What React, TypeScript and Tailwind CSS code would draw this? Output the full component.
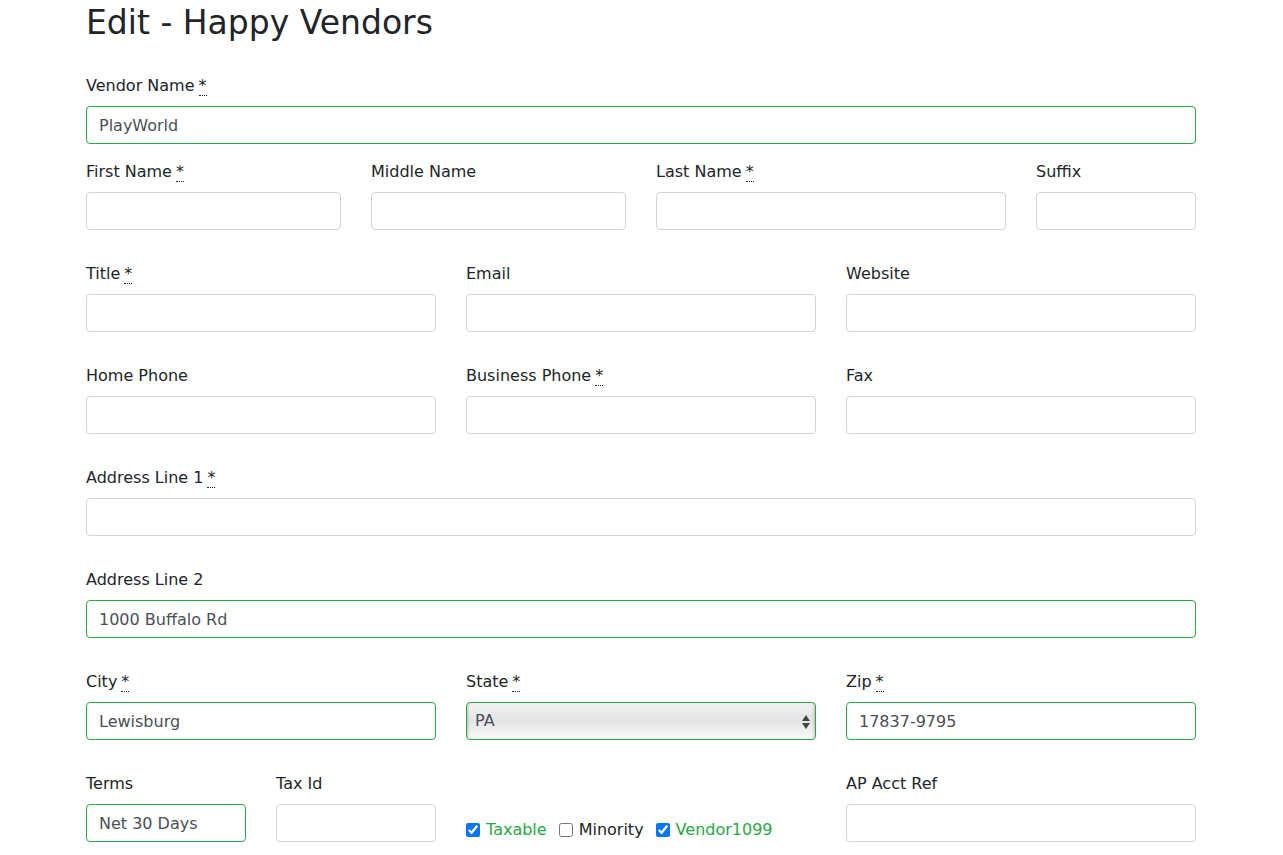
import { ReactNode } from "react";

const Req = () => (
  <abbr
    title="required"
    className="ml-1 no-underline border-b border-dotted border-[#212529] cursor-help"
  >
    *
  </abbr>
);

const Field = ({
  label,
  required,
  value,
  valid,
  className,
}: {
  label: string;
  required?: boolean;
  value?: string;
  valid?: boolean;
  className?: string;
}) => (
  <div className={className}>
    <label className="block mb-2 leading-6">
      {label}
      {required && <Req />}
    </label>
    <input
      type="text"
      defaultValue={value}
      className={
        "block w-full h-[38px] px-3 rounded border bg-white text-[#495057] outline-none " +
        (valid ? "border-[#28a745]" : "border-[#ced4da]")
      }
    />
  </div>
);

const Row = ({ children, className }: { children: ReactNode; className?: string }) => (
  <div className={"grid grid-cols-12 gap-x-[30px] " + (className ?? "")}>{children}</div>
);

const Check = ({ label, checked }: { label: string; checked?: boolean }) => (
  <label className={"flex items-center " + (checked ? "text-[#28a745]" : "text-[#212529]")}>
    <input type="checkbox" defaultChecked={checked} className="w-[14px] h-[14px] mr-[6px] accent-[#0a75ef]" />
    {label}
  </label>
);

export default function App() {
  return (
    <div
      className="min-h-screen bg-white text-[#212529] text-base"
      style={{ fontFamily: '"DejaVu Sans", sans-serif' }}
    >
      <div className="w-[1110px] ml-[86px]">
        <h1 className="text-[33px] leading-[46px] font-normal mb-[28px]">Edit - Happy Vendors</h1>

        <Field label="Vendor Name" required value="PlayWorld" valid className="mb-4" />

        <Row className="mb-8">
          <Field label="First Name" required className="col-span-3" />
          <Field label="Middle Name" className="col-span-3" />
          <Field label="Last Name" required className="col-span-4" />
          <Field label="Suffix" className="col-span-2" />
        </Row>

        <Row className="mb-8">
          <Field label="Title" required className="col-span-4" />
          <Field label="Email" className="col-span-4" />
          <Field label="Website" className="col-span-4" />
        </Row>

        <Row className="mb-8">
          <Field label="Home Phone" className="col-span-4" />
          <Field label="Business Phone" required className="col-span-4" />
          <Field label="Fax" className="col-span-4" />
        </Row>

        <Field label="Address Line 1" required className="mb-8" />
        <Field label="Address Line 2" value="1000 Buffalo Rd" valid className="mb-8" />

        <Row className="mb-8">
          <Field label="City" required value="Lewisburg" valid className="col-span-4" />
          <div className="col-span-4">
            <label className="block mb-2 leading-6">
              State
              <Req />
            </label>
            <div className="relative h-[38px] rounded border border-[#28a745] bg-gradient-to-b from-[#f2f2f2] via-[#e4e4e4] to-[#fbfbfb] shadow-[inset_3px_0_3px_-2px_rgba(0,0,0,0.2),inset_-3px_0_3px_-2px_rgba(0,0,0,0.2)]">
              <span className="absolute left-2 top-0 leading-9 text-[#495057]">PA</span>
              <svg
                className="absolute right-[5px] top-[12px]"
                width="8"
                height="14"
                viewBox="0 0 8 14"
              >
                <path d="M4 0 L8 6 L0 6 Z" fill="#444" />
                <path d="M0 8 L8 8 L4 14 Z" fill="#444" />
              </svg>
            </div>
          </div>
          <Field label="Zip" required value="17837-9795" valid className="col-span-4" />
        </Row>

        <Row>
          <Field label="Terms" value="Net 30 Days" valid className="col-span-2" />
          <Field label="Tax Id" className="col-span-2" />
          <div className="col-span-4 flex items-end">
            <div className="flex items-center gap-[12px] h-[24px]">
              <Check label="Taxable" checked />
              <Check label="Minority" />
              <Check label="Vendor1099" checked />
            </div>
          </div>
          <Field label="AP Acct Ref" className="col-span-4" />
        </Row>
      </div>
    </div>
  );
}
